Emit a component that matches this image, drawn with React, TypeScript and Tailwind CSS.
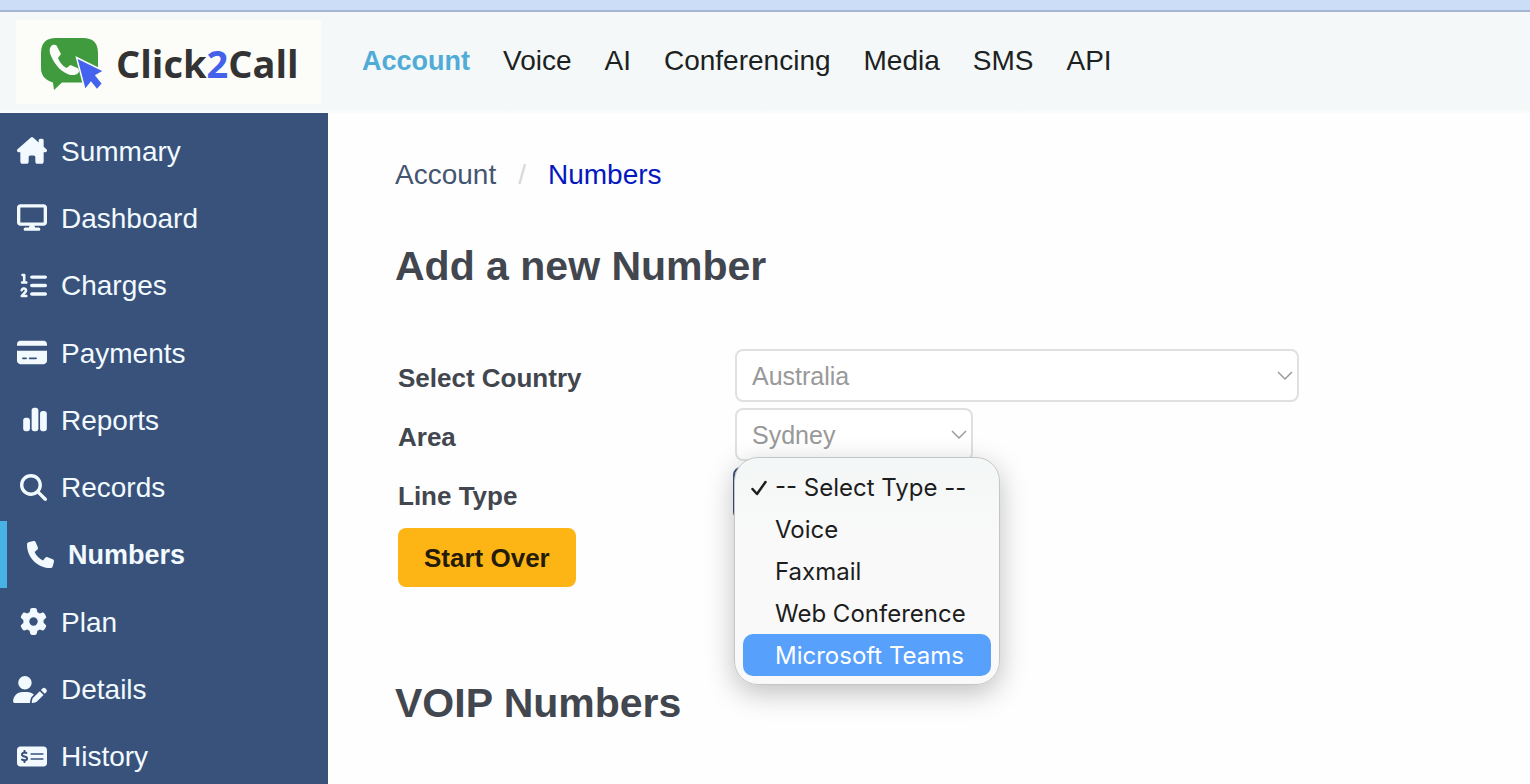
import { useState } from "react";
import type { IconType } from "react-icons";
import {
  FaChartSimple,
  FaCreditCard,
  FaDisplay,
  FaGear,
  FaHouseChimney,
  FaListOl,
  FaMagnifyingGlass,
  FaMoneyCheckDollar,
  FaPhone,
  FaUserPen,
} from "react-icons/fa6";

const SECTIONS = ["Account", "Voice", "AI", "Conferencing", "Media", "SMS", "API"];

const MENU: { label: string; icon: IconType; size: string }[] = [
  { label: "Summary", icon: FaHouseChimney, size: "w-[30px]" },
  { label: "Dashboard", icon: FaDisplay, size: "w-[30px]" },
  { label: "Charges", icon: FaListOl, size: "w-[27px]" },
  { label: "Payments", icon: FaCreditCard, size: "w-[30px]" },
  { label: "Reports", icon: FaChartSimple, size: "w-[24px]" },
  { label: "Records", icon: FaMagnifyingGlass, size: "w-[27px]" },
  { label: "Numbers", icon: FaPhone, size: "w-[27px]" },
  { label: "Plan", icon: FaGear, size: "w-[27px]" },
  { label: "Details", icon: FaUserPen, size: "w-[34px]" },
  { label: "History", icon: FaMoneyCheckDollar, size: "w-[30px]" },
];

const LINE_TYPES = ["-- Select Type --", "Voice", "Faxmail", "Web Conference", "Microsoft Teams"];

function Logo() {
  return (
    <a href="#" className="flex h-[84px] w-[305px] items-center bg-[#fcfcf9] pt-[2px] pl-6">
      <svg viewBox="0 0 64 54" className="h-[54px] w-16 shrink-0 overflow-visible">
        <path
          d="M16 2H43Q58 2 58 17V32Q58 46.500 43 46.500H22L14 54L13 46.500Q1 43 1 32V17Q1 2 16 2Z"
          fill="#3f9b3e"
        />
        <path
          d="M12.500 9C9.500 11 8.500 15 11.500 21C15.500 30 22.500 37 30.500 39C34.500 39.500 38 38.500 39 35.500L38.500 32.500L30.500 29L26.500 32C22.500 30 19.500 26 18 22L21 18L16.500 9.500C15.500 8.500 14 8.500 12.500 9Z"
          fill="#fcfcf9"
        />
        <path
          d="M36.500 21.500L64 35L56 39.500L62.500 47.500L57 54L51 46.500L45 54Z"
          fill="#4362ee"
          stroke="#fcfcf9"
          strokeWidth="1.500"
        />
      </svg>
      <span className="ml-3 font-['Open_Sans',sans-serif] text-[38px] leading-[50px] font-bold text-[#333]">
        Click<span className="text-[#4461ea]">2</span>Call
      </span>
    </a>
  );
}

interface SelectFieldProps {
  id: string;
  value: string;
}

function SelectField({ id, value }: SelectFieldProps) {
  return (
    <div className="relative">
      <select
        id={id}
        disabled
        className="block h-[53px] w-full appearance-none rounded-lg border-2 border-[#e0e0e0] bg-white px-[15px] pt-[2px] text-[25px] text-[#999]"
      >
        <option>{value}</option>
      </select>
      <svg
        viewBox="0 0 16 10"
        className="pointer-events-none absolute top-[22px] right-[6px] h-[10px] w-4"
        fill="none"
        stroke="#9b9b9b"
        strokeWidth="1.500"
      >
        <path d="M1 1L8 8L15 1" />
      </svg>
    </div>
  );
}

export default function App() {
  const [lineType, setLineType] = useState(LINE_TYPES[0]);
  const [highlighted, setHighlighted] = useState("Microsoft Teams");

  return (
    <div className="flex h-screen flex-col overflow-hidden bg-[#fefefe] font-['Liberation_Sans',Arial,sans-serif]">
      <div className="h-3 shrink-0 border-b-2 border-[#a3b5cf] bg-[#cbddf7]" />

      {/* Top navigation */}
      <header className="flex h-[101px] shrink-0 items-start bg-linear-to-b from-[#f4f8f8] from-95% to-[#fbfcfc] pt-2 pl-4">
        <Logo />
        <nav className="flex h-[84px] items-center gap-[33px] pb-[2px] pl-[41px] text-[28px] text-[#1c2121]">
          {SECTIONS.map((s) => (
            <a
              key={s}
              href="#"
              className={s === "Account" ? "text-[27px] font-bold text-[#50acd7]" : ""}
            >
              {s}
            </a>
          ))}
        </nav>
      </header>

      <div className="flex min-h-0 flex-1">
        {/* Sidebar */}
        <aside className="w-[328px] shrink-0 overflow-hidden bg-[#38527b] pt-1">
          <ul className="grid h-[673px] auto-rows-fr text-[28px] text-[#f2faff]">
            {MENU.map(({ label, icon: Icon, size }) => {
              const active = label === "Numbers";
              return (
                <li key={label}>
                  <a
                    href="#"
                    className={`flex h-full items-center gap-[14px] ${
                      active ? "border-l-[7px] border-[#48b2e5] text-[27px] font-bold" : ""
                    }`}
                  >
                    <span className="flex w-[47px] justify-end">
                      <Icon className={`h-[27px] shrink-0 ${size}`} />
                    </span>
                    <span className="pt-[2px]">{label}</span>
                  </a>
                </li>
              );
            })}
          </ul>
        </aside>

        {/* Content */}
        <main className="min-w-0 flex-1 px-[67px] pt-[42px] text-[#42464e]">
          <nav aria-label="Breadcrumb" className="flex items-center gap-[22px] text-[28px] leading-10">
            <a href="#" className="text-[#435570]">Account</a>
            <span className="text-[#d8d8d8]">/</span>
            <a href="#" className="text-[#0418c0]">Numbers</a>
          </nav>

          <h1 className="mt-[46px] text-[41px] leading-[50px] font-bold">Add a new Number</h1>

          <form className="mt-[58px] ml-[3px]" onSubmit={(e) => e.preventDefault()}>
            <div className="grid grid-cols-[337px_minmax(0,564px)] items-center gap-y-[6px] text-[26px]">
              <label htmlFor="country" className="pt-[6px] font-bold">Select Country</label>
              <SelectField id="country" value="Australia" />

              <label htmlFor="area" className="pt-[6px] font-bold">Area</label>
              <div className="w-[238px]">
                <SelectField id="area" value="Sydney" />
              </div>

              <label htmlFor="line-type" className="pt-[6px] font-bold">Line Type</label>
              <div className="relative w-[238px]">
                <select
                  id="line-type"
                  value={lineType}
                  onChange={(e) => setLineType(e.target.value)}
                  className="-ml-[2px] block h-[53px] w-full appearance-none rounded-lg border-2 border-[#38527b] bg-white px-4"
                >
                  {LINE_TYPES.map((t) => (
                    <option key={t}>{t}</option>
                  ))}
                </select>

                {/* Open option list */}
                <div
                  role="listbox"
                  aria-label="Line Type"
                  className="absolute -top-[10px] -left-px z-10 w-[266px] rounded-3xl border border-[#c4c6c6] bg-linear-to-b from-[#f4f7f7] to-[#f9f9f9] to-35% p-2 font-[Inter,sans-serif] text-[24px] text-[#1d1d1d] shadow-[0_8px_28px_rgba(0,0,0,0.25)]"
                >
                  {LINE_TYPES.map((t) => (
                    <button
                      key={t}
                      type="button"
                      role="option"
                      aria-selected={t === lineType}
                      onMouseEnter={() => setHighlighted(t)}
                      onClick={() => setLineType(t)}
                      className={`flex h-[42px] w-full items-center rounded-[10px] pt-px pl-2 text-left whitespace-nowrap ${
                        t === highlighted ? "bg-[#57a0fb] text-white" : ""
                      }`}
                    >
                      <span className="w-6 shrink-0">
                        {t === lineType && (
                          <svg
                            viewBox="0 0 16 16"
                            className="size-4"
                            fill="none"
                            stroke="currentColor"
                            strokeWidth="2.500"
                            strokeLinecap="round"
                            strokeLinejoin="round"
                          >
                            <path d="M1.500 9L6 14L14.500 2" />
                          </svg>
                        )}
                      </span>
                      {t}
                    </button>
                  ))}
                </div>
              </div>
            </div>

            <button
              type="button"
              className="mt-2 h-[59px] rounded-lg bg-[#fdb515] px-[26px] pt-[2px] text-[26px] font-bold text-[#241b08]"
            >
              Start Over
            </button>
          </form>

          <h2 className="mt-[91px] text-[41px] leading-[50px] font-bold">VOIP Numbers</h2>
        </main>
      </div>
    </div>
  );
}
